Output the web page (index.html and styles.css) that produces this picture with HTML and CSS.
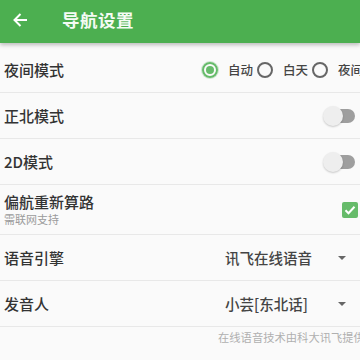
FILE: index.html
```html
<!DOCTYPE html>
<html lang="zh">
<head>
<meta charset="utf-8">
<link rel="stylesheet" href="styles.css">
</head>
<body>
<div class="app">
  <header class="bar">
    <svg class="back" width="16" height="16" viewBox="0 0 16 16"><path d="M15 8H2.5M8.5 2L2.5 8l6 6" fill="none" stroke="#fff" stroke-width="2"/></svg>
    <span class="title">导航设置</span>
  </header>
  <div class="list">
    <div class="row">
      <span class="label fixed">夜间模式</span>
      <div class="radios">
        <span class="radio on"></span><span class="rlabel">自动</span>
        <span class="radio"></span><span class="rlabel">白天</span>
        <span class="radio"></span><span class="rlabel">夜间</span>
      </div>
    </div>
    <div class="row">
      <span class="label">正北模式</span>
      <span class="switch"><span class="thumb"></span></span>
    </div>
    <div class="row">
      <span class="label">2D模式</span>
      <span class="switch"><span class="thumb"></span></span>
    </div>
    <div class="row tall">
      <div class="stack">
        <span class="label">偏航重新算路</span>
        <span class="sub">需联网支持</span>
      </div>
      <span class="check"><svg width="12" height="12" viewBox="0 0 12 12"><path d="M1.5 6.2l3 3 6-6.5" fill="none" stroke="#fff" stroke-width="2"/></svg></span>
    </div>
    <div class="row">
      <span class="label dd">语音引擎</span>
      <span class="value">讯飞在线语音</span>
      <span class="caret"></span>
    </div>
    <div class="row">
      <span class="label dd">发音人</span>
      <span class="value">小芸[东北话]</span>
      <span class="caret"></span>
    </div>
    <div class="footer">在线语音技术由科大讯飞提供</div>
  </div>
</div>
</body>
</html>
```
FILE: styles.css
```css
* { box-sizing: border-box; }
html, body { margin: 0; padding: 0; }
body {
  width: 360px;
  height: 360px;
  overflow: hidden;
  background: #fafafa;
  font-family: "Noto Sans CJK SC", "Noto Sans", sans-serif;
  color: #333;
}
.bar {
  height: 43px;
  background: #4caf50;
  display: flex;
  align-items: center;
  padding-left: 12px;
  box-shadow: 0 2px 4px rgba(0,0,0,0.25);
  position: relative;
  z-index: 1;
}
.back { margin-top: -4px; }
.title {
  color: #f4fbf4;
  font-size: 17.5px;
  font-weight: 700;
  margin-left: 34px;
  margin-top: -5px;
  letter-spacing: 0.5px;
}
.list { padding-top: 4px; }
.row {
  height: 46px;
  border-bottom: 1px solid #e8e8e8;
  display: flex;
  align-items: center;
  padding: 0 0 0 4px;
  white-space: nowrap;
  overflow: hidden;
}
.row.tall { height: 50px; }
.label {
  font-size: 15px;
  font-weight: 500;
  color: #333;
  flex: 1;
}
.label.fixed { flex: 0 0 198px; }
.label.dd { flex: 0 0 221px; }
.radios { display: flex; align-items: center; flex: none; }
.radio {
  width: 16px;
  height: 16px;
  border-radius: 50%;
  border: 2px solid #666;
  margin-left: 4px;
  flex: none;
  position: relative;
}
.radio.on {
  margin-left: 0;
  border-color: #66bb6a;
  box-shadow: 0 0 0 1px rgba(102,187,106,0.3);
}
.radio.on::after {
  content: "";
  position: absolute;
  left: 2px; top: 2px;
  width: 8px; height: 8px;
  border-radius: 50%;
  background: #66bb6a;
}
.rlabel {
  font-size: 12.5px;
  font-weight: 500;
  color: #444;
  margin-left: 10px;
}
.switch {
  width: 30px;
  height: 20px;
  margin-right: 5px;
  position: relative;
  flex: none;
}
.switch::before {
  content: "";
  position: absolute;
  left: 3px; right: 0; top: 3px;
  height: 14px;
  border-radius: 7px;
  background: #9e9e9e;
}
.thumb {
  position: absolute;
  left: -2px; top: 0;
  width: 20px; height: 20px;
  border-radius: 50%;
  background: #eeeeee;
  box-shadow: 0 1px 2px rgba(0,0,0,0.2);
}
.stack { display: flex; flex-direction: column; flex: 1; margin-top: -2px; }
.stack .label { line-height: 20px; }
.sub { font-size: 11px; color: #9a9a9a; line-height: 14px; }
.check {
  width: 16px; height: 16px;
  margin-right: 2px;
  background: #66bb6a;
  border-radius: 2px;
  display: flex;
  align-items: center;
  justify-content: center;
  flex: none;
}
.value {
  font-size: 14.5px;
  font-weight: 500;
  color: #444;
  flex: 1;
}
.caret {
  width: 0; height: 0;
  border-left: 4px solid transparent;
  border-right: 4px solid transparent;
  border-top: 4px solid #666;
  margin-right: 14px;
  flex: none;
}
.footer {
  padding-left: 218px;
  font-size: 11.3px;
  color: #b0b0b0;
  line-height: 20px;
  white-space: nowrap;
  overflow: hidden;
}
```
